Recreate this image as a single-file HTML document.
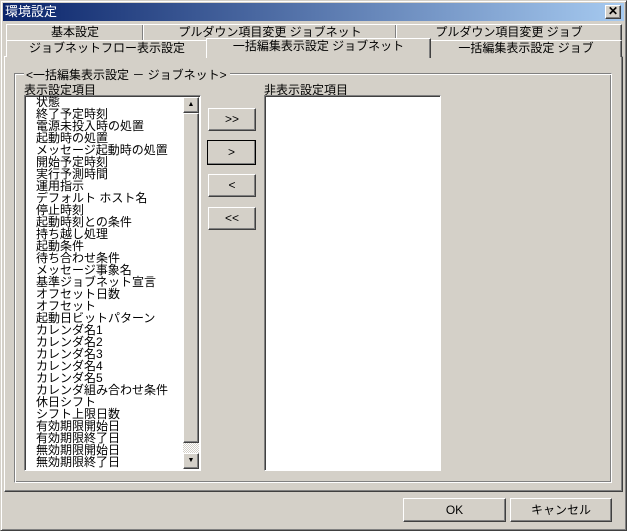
<!DOCTYPE html><html><head><meta charset="utf-8"><style>
*{box-sizing:border-box;margin:0;padding:0}
body{width:627px;height:531px;background:#d4d0c8;font:12px "Liberation Sans","Noto Sans CJK JP",sans-serif;position:relative;overflow:hidden;color:#000}
.a{position:absolute}
.out{border:1px solid;border-color:#fff #404040 #404040 #fff;box-shadow:inset -1px -1px #808080}
.in{border:1px solid;border-color:#808080 #fff #fff #808080;box-shadow:inset 1px 1px #404040}
.tab{position:absolute;height:17px;border:1px solid;border-bottom:none;border-color:#fff #404040 #404040 #fff;box-shadow:inset -1px 0 #808080;text-align:center;line-height:15px;background:#d4d0c8}
.btn{position:absolute;text-align:center;background:#d4d0c8}
.list div{height:12px;line-height:12px;white-space:nowrap}
</style></head><body>
<div class="a" style="left:0;top:0;width:627px;height:531px;border:1px solid;border-color:#d4d0c8 #404040 #404040 #d4d0c8;box-shadow:inset 1px 1px #fff,inset -1px -1px #808080"></div>
<div class="a" style="left:3px;top:3px;width:621px;height:18px;background:linear-gradient(90deg,#0a246a,#a6caf0);color:#fff;padding-left:2px;line-height:18px;font-size:13px">環境設定</div>
<div class="a out" style="left:605px;top:5px;width:16px;height:14px;background:#d4d0c8;text-align:center;line-height:11px;font-weight:bold;font-size:12px">✕</div>
<div class="a out" style="left:4px;top:56px;width:619px;height:436px;border-top-color:#fff"></div>
<div class="tab" style="left:6px;top:24px;width:138px">基本設定</div>
<div class="tab" style="left:143px;top:24px;width:254px">プルダウン項目変更 ジョブネット</div>
<div class="tab" style="left:396px;top:24px;width:226px">プルダウン項目変更 ジョブ</div>
<div class="tab" style="left:6px;top:40px;width:202px">ジョブネットフロー表示設定</div>
<div class="tab" style="left:430px;top:40px;width:192px">一括編集表示設定 ジョブ</div>
<div class="tab" style="left:206px;top:38px;width:225px;height:20px;z-index:2">一括編集表示設定 ジョブネット</div>
<div class="a" style="left:14px;top:73px;width:598px;height:410px;border:1px solid;border-color:#808080 #fff #fff #808080;box-shadow:inset 1px 1px #fff,inset -1px -1px #808080"></div>
<div class="a" style="left:24px;top:66px;background:#d4d0c8;padding:0 3px 0 2px">&lt;一括編集表示設定 － ジョブネット&gt;</div>
<div class="a" style="left:24px;top:81px">表示設定項目</div>
<div class="a" style="left:264px;top:81px">非表示設定項目</div>
<div class="a in" style="left:24px;top:95px;width:177px;height:376px;background:#fff"></div>
<div class="a list" style="left:36px;top:96px;font-size:12px">
<div>状態</div><div>終了予定時刻</div><div>電源未投入時の処置</div><div>起動時の処置</div><div>メッセージ起動時の処置</div><div>開始予定時刻</div><div>実行予測時間</div><div>運用指示</div><div>デフォルト ホスト名</div><div>停止時刻</div><div>起動時刻との条件</div><div>持ち越し処理</div><div>起動条件</div><div>待ち合わせ条件</div><div>メッセージ事象名</div><div>基準ジョブネット宣言</div><div>オフセット日数</div><div>オフセット</div><div>起動日ビットパターン</div><div>カレンダ名1</div><div>カレンダ名2</div><div>カレンダ名3</div><div>カレンダ名4</div><div>カレンダ名5</div><div>カレンダ組み合わせ条件</div><div>休日シフト</div><div>シフト上限日数</div><div>有効期限開始日</div><div>有効期限終了日</div><div>無効期限開始日</div><div>無効期限終了日</div></div>
<div class="a" style="left:183px;top:97px;width:16px;height:372px;background:repeating-conic-gradient(#fff 0 25%,#d4d0c8 0 50%) 0 0/2px 2px"></div>
<div class="a out" style="left:183px;top:97px;width:16px;height:16px;background:#d4d0c8;font-size:7px;text-align:center;line-height:13px">▲</div>
<div class="a out" style="left:183px;top:113px;width:16px;height:330px;background:#d4d0c8"></div>
<div class="a out" style="left:183px;top:453px;width:16px;height:16px;background:#d4d0c8;font-size:7px;text-align:center;line-height:13px">▼</div>
<div class="a in" style="left:264px;top:95px;width:177px;height:376px;background:#fff"></div>
<div class="btn out" style="left:208px;top:108px;width:48px;height:23px;line-height:21px">&gt;&gt;</div>
<div class="btn out" style="left:207px;top:140px;width:49px;height:25px;line-height:22px;outline:1px solid #000;outline-offset:-1px">&gt;</div>
<div class="btn out" style="left:208px;top:174px;width:48px;height:23px;line-height:21px">&lt;</div>
<div class="btn out" style="left:208px;top:207px;width:48px;height:23px;line-height:21px">&lt;&lt;</div>
<div class="btn out" style="left:403px;top:498px;width:103px;height:24px;line-height:22px">OK</div>
<div class="btn out" style="left:510px;top:498px;width:102px;height:24px;line-height:22px">キャンセル</div>
</body></html>
